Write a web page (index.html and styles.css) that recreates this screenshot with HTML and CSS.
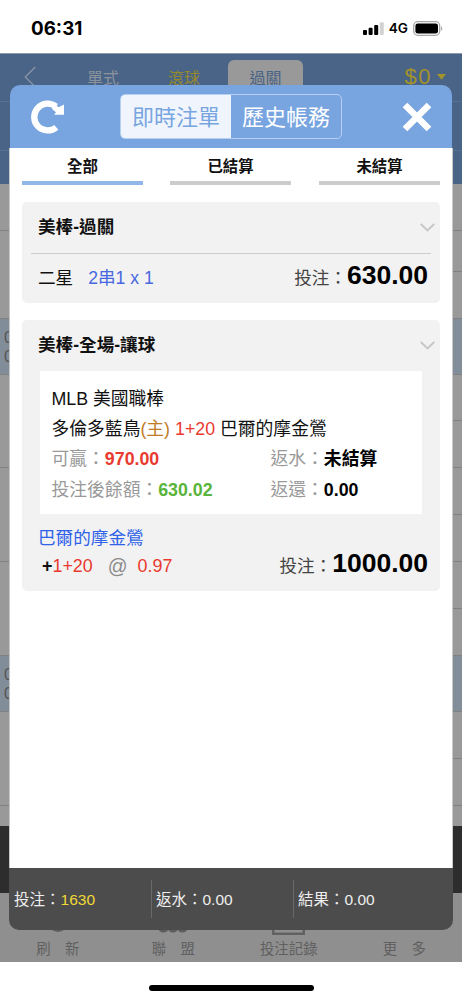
FILE: index.html
```
<!DOCTYPE html>
<html lang="zh-Hant">
<head>
<meta charset="utf-8">
<meta name="viewport" content="width=device-width, initial-scale=1">
<title>即時注單</title>
<link rel="stylesheet" href="styles.css">
</head>
<body>
<div class="phone">
  <header class="status">
    <span class="time">06:31</span>
    <span class="signals">
      <svg class="bars" width="21" height="13" viewBox="0 0 21 13"><rect x="0" y="8" width="4" height="5" rx="1"/><rect x="5.6" y="5.700" width="4" height="7.300" rx="1"/><rect x="11.2" y="3" width="4" height="10" rx="1"/><rect x="16.800" y="0.3" width="4" height="12.7" rx="1" fill="#d2d2d2"/></svg>
      <span class="net">4G</span>
      <svg width="30" height="15" viewBox="0 0 30 15"><rect x="0.7" y="0.7" width="26" height="13.6" rx="4" fill="none" stroke="#a8a8a8" stroke-width="1.3"/><rect x="2.4" y="2.4" width="22.6" height="10.2" rx="2.4"/><path d="M28 5.2c1.8.8 1.8 3.8 0 4.6z" fill="#a8a8a8"/></svg>
    </span>
  </header>

  <main class="page">
    <div class="page-head">
      <nav class="modes">
        <svg class="back" width="12" height="22" viewBox="0 0 12 22"><path d="M11.3 1 1.2 11l10.1 10" fill="none" stroke="#8a97a8" stroke-width="1.2"/></svg>
        <span class="mode mode-single">單式</span>
        <span class="mode mode-live">滾球</span>
        <span class="mode mode-parlay">過關</span>
        <span class="balance">$0</span>
        <svg class="caret" width="9" height="6" viewBox="0 0 9 6"><path d="M0 0h9L4.500 5.800z" fill="#a3932a"/></svg>
      </nav>
      <div class="head-row"></div>
      <div class="head-row last"></div>
    </div>
    <div class="games">
      <div class="games-col left">
        <div class="g r47"></div><div class="g r88"></div>
        <div class="g league">0<br>0</div>
        <div class="g r93"></div><div class="g r94"></div><div class="g r94"></div>
        <div class="g league">0<br>0</div>
        <div class="g r94"></div>
      </div>
      <div class="games-col right">
        <div class="g r47"></div><div class="g r41"></div><div class="g r47"></div>
        <div class="g league"></div>
        <div class="g r46"></div><div class="g r47"></div><div class="g r47"></div><div class="g r47"></div><div class="g r47"></div><div class="g r47"></div>
        <div class="g league"></div>
        <div class="g r47"></div><div class="g r47"></div>
      </div>
    </div>
    <div class="slip"></div>
    <nav class="dock">
      <div class="dock-item"><svg width="20" height="20" viewBox="0 0 20 20"><circle cx="10" cy="7" r="8.500" fill="none" stroke="#5e5e5e" stroke-width="3"/></svg><span>刷　新</span></div>
      <div class="dock-item"><svg width="30" height="20" viewBox="0 0 30 20"><g fill="none" stroke="#5e5e5e" stroke-width="2.500"><circle cx="5.500" cy="12" r="4.300"/><circle cx="15" cy="12" r="4.300"/><circle cx="24.500" cy="12" r="4.300"/></g></svg><span>聯　盟</span></div>
      <div class="dock-item"><svg width="33" height="24" viewBox="0 0 33 24"><rect x="1.250" y="1.250" width="30.500" height="21.500" fill="none" stroke="#5e5e5e" stroke-width="2.300"/></svg><span>投注記錄</span></div>
      <div class="dock-item"><svg width="20" height="18"></svg><span>更　多</span></div>
    </nav>
  </main>
  <footer class="home"><div class="home-bar"></div></footer>

  <section class="modal">
    <div class="modal-head">
      <svg class="reload" width="34" height="34" viewBox="0 0 34 34"><path d="M25.300 27.300A13.400 13.400 0 1 1 24.900 6.500" fill="none" stroke="#fff" stroke-width="6.300"/><path d="M24 3.800 27.600 7.200 33 4.600V14.700H23.100L25 12.300 21 9z" fill="#fff"/></svg>
      <div class="segment"><span class="seg on">即時注單</span><span class="seg">歷史帳務</span></div>
      <svg class="close" width="30" height="30" viewBox="0 0 30 30"><path d="M3 3 27 27M27 3 3 27" stroke="#fff" stroke-width="6.600"/></svg>
    </div>
    <div class="modal-body">
      <nav class="tabs"><span class="tab on">全部</span><span class="tab">已結算</span><span class="tab">未結算</span></nav>

      <article class="card parlay">
        <div class="card-title ruled"><b>美棒-過關</b><svg width="15" height="9" viewBox="0 0 15 9"><path d="M.8 1 7.500 7.500 14.200 1" fill="none" stroke="#c6c6c6" stroke-width="1.800"/></svg></div>
        <div class="parlay-row">
          <span>二星</span><span class="combo">2串1 x 1</span>
          <span class="stake">投注：<b>630.00</b></span>
        </div>
      </article>

      <article class="card single">
        <div class="card-title"><b>美棒-全場-讓球</b><svg width="15" height="9" viewBox="0 0 15 9"><path d="M.8 1 7.500 7.500 14.200 1" fill="none" stroke="#c6c6c6" stroke-width="1.800"/></svg></div>
        <div class="match">
          <div>MLB 美國職棒</div>
          <div>多倫多藍鳥<span class="host">(主)</span> <span class="red">1+20</span> 巴爾的摩金鶯</div>
          <div class="pair"><span>可贏：<b class="red">970.00</b></span><span>返水：<b>未結算</b></span></div>
          <div class="pair"><span>投注後餘額：<b class="green">630.02</b></span><span>返還：<b>0.00</b></span></div>
        </div>
        <div class="pick">
          <div class="pick-info">
            <div class="team">巴爾的摩金鶯</div>
            <div class="odds"><b>+</b><span class="red">1+20</span><span class="at">@</span><span class="red">0.97</span></div>
          </div>
          <span class="stake">投注：<b>1000.00</b></span>
        </div>
      </article>
    </div>
    <div class="totals">
      <span>投注：<em>1630</em></span><span>返水：0.00</span><span>結果：0.00</span>
    </div>
  </section>
</div>
</body>
</html>
```
FILE: styles.css
```
* { box-sizing: border-box; }
body {
  margin: 0;
  background: #fff;
  color: #111;
  font-family: "Liberation Sans", "Noto Sans CJK TC", sans-serif;
  font-size: 17.6px;
}
svg { display: block; flex: none; }
.phone {
  position: relative;
  width: 462px;
  height: 1000px;
  overflow: hidden;
  display: flex;
  flex-direction: column;
}

/* status bar */
.status {
  height: 53px;
  display: flex;
  justify-content: space-between;
  align-items: center;
  padding: 3px 19px 0 31px;
  color: #000;
}
.time { font: 700 18.8px/24px Inter, sans-serif; padding-top: 1px; }
.signals { display: flex; align-items: center; }
.net { font: 600 13.6px/16px Inter, sans-serif; margin: 0 5px; }

/* dimmed page */
.page { display: flex; flex-direction: column; height: 909px; background: #999; }
.page-head { height: 131px; background: #4a6487; border-top: 1px solid #8d9aaa; }
.modes { display: flex; height: 47px; padding: 6px 16px 0 24px; }
.back { margin-top: 6px; }
.mode { font-size: 16px; line-height: 37px; color: #8b939d; }
.mode-single { margin-left: 51px; }
.mode-live { margin-left: 49px; color: #95892c; }
.mode-parlay {
  margin-left: 28px;
  width: 75px;
  height: 41px;
  border-radius: 6px 6px 0 0;
  background: #999;
  color: #4a6487;
  text-align: center;
}
.balance { margin-left: auto; font-size: 22px; letter-spacing: 1.5px; line-height: 34px; color: #a3932a; }
.caret { margin: 14px 0 0 5px; }
.head-row { height: 49px; border-top: 1px solid #587191; }
.games { display: flex; justify-content: space-between; height: 642px; }
.games-col { width: 231px; }
.g { border-bottom: 1px solid #818181; }
.r41 { height: 41px; }
.r46 { height: 46px; }
.r47 { height: 47px; }
.r88 { height: 88px; }
.r93 { height: 93px; }
.r94 { height: 94px; }
.league {
  height: 56px;
  padding: 9px 0 0 4px;
  background: #818d98;
  color: #555;
  font-size: 16px;
  line-height: 19px;
}
.slip { height: 67px; background: #2d2d2d; }
.dock { display: flex; height: 69px; background: #8f8f8f; }
.dock-item {
  flex: 1;
  display: flex;
  flex-direction: column;
  justify-content: flex-end;
  align-items: center;
  padding-bottom: 4px;
  font-size: 14.4px;
  color: #606060;
}
.dock-item span { line-height: 18px; margin-top: 5px; }
.home { display: flex; justify-content: center; padding-top: 23px; }
.home-bar { width: 165px; height: 6px; border-radius: 3px; background: #000; }

/* dialog over the page */
.modal {
  position: absolute;
  left: 10px;
  top: 85px;
  width: 442px;
  height: 845px;
  display: flex;
  flex-direction: column;
}
.modal-head {
  height: 63px;
  display: flex;
  align-items: center;
  padding: 0 20px 0 21px;
  border-radius: 10px 10px 0 0;
  background: #78a5e0;
}
.segment {
  display: flex;
  width: 222px;
  height: 45px;
  margin-left: 55px;
  border: 1px solid #b5d0f2;
  border-radius: 5px;
  overflow: hidden;
}
.close { margin-left: auto; }
.seg { flex: 1; text-align: center; font-size: 22px; line-height: 46px; color: #fff; }
.seg.on { background: #f0f5fd; color: #78a5e0; }
.modal-body { flex: 1; padding: 0 12px; background: #fff; box-shadow: -1px 0 #c8c8c8, 1px 0 #c8c8c8; }
.tabs { display: flex; width: 418px; }
.tab {
  width: 121px;
  height: 37px;
  margin-right: 28px;
  border-bottom: 4px solid #ccc;
  text-align: center;
  font-weight: 700;
  font-size: 15.4px;
  line-height: 37px;
}
.tab.on { border-color: #91b7e9; margin-right: 27px; }
.tab:last-child { margin-right: 0; }

/* bet cards */
.card { margin-top: 17px; border-radius: 5px; background: #f2f2f2; width: 418px; }
.parlay { height: 101px; padding: 0 9px; }
.single { height: 271px; padding: 0 9px; }
.card-title {
  height: 51px;
  display: flex;
  align-items: center;
  justify-content: space-between;
  padding: 0 0 0 7px;
  margin-right: -4px;
}
.card-title b { padding-bottom: 4px; }
.ruled { height: 52px; margin-right: 0; border-bottom: 1px solid #ccc; }
.ruled svg { margin-right: -4px; }
.parlay-row { display: flex; padding: 8px 3px 0 7px; line-height: 33px; }
.combo { margin-left: 15px; color: #4868e0; }
.stake { margin-left: auto; color: #444; white-space: nowrap; line-height: 26px; }
.stake b { font-size: 26.5px; color: #000; }
.parlay-row .stake { line-height: 27px; }
.match {
  width: 382px;
  height: 143px;
  margin-left: 9px;
  padding: 13px 12px 0 11.500px;
  background: #fff;
  font-size: 17.8px;
  line-height: 30.2px;
}
.pair { display: grid; grid-template-columns: 219px 1fr; color: #999; }
.pair b { color: #000; }
.host { color: #c17a26; }
.red, .pair .red { color: #e93a2f; }
.green, .pair .green { color: #58b43a; }
.pick { display: flex; align-items: flex-end; padding: 10px 3px 0 7px; }
.pick-info { line-height: 28px; }
.pick .stake { padding-bottom: 1px; }
.team { color: #2f62e8; }
.odds { display: flex; padding-left: 4px; font-size: 17.9px; }
.odds .at { margin: 0 10px 0 15px; font-size: 19.500px; color: #8b8b8b; }

/* totals */
.totals {
  display: flex;
  align-items: center;
  height: 62px;
  margin-left: -1px;
  width: 444px;
  border-radius: 0 0 10px 10px;
  background: #4c4c4c;
  color: #eee;
  font-size: 15.5px;
}
.totals span { width: 142px; height: 38px; line-height: 39px; padding-left: 4px; border-left: 1px solid #696969; }
.totals span:first-child { border-left: 0; padding-left: 5px; }
.totals em { font-style: normal; color: #f0d936; }
```
